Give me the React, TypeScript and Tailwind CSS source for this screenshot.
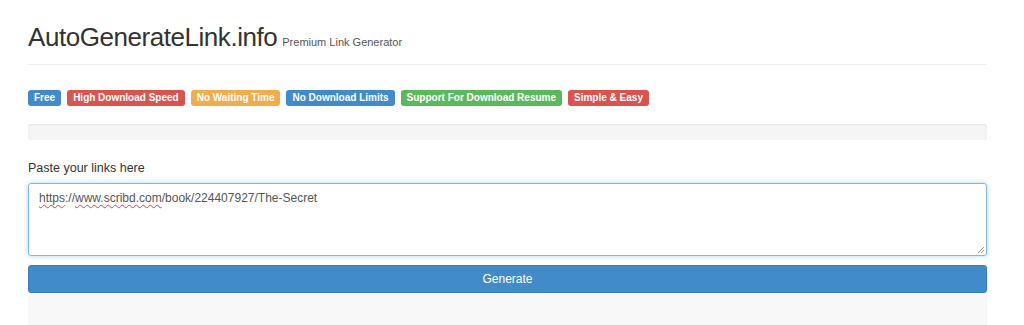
const badges = [
  { text: 'Free', color: 'bg-[#428bca]' },
  { text: 'High Download Speed', color: 'bg-[#d9534f]' },
  { text: 'No Waiting Time', color: 'bg-[#f0ad4e]' },
  { text: 'No Download Limits', color: 'bg-[#428bca]' },
  { text: 'Support For Download Resume', color: 'bg-[#5cb85c]' },
  { text: 'Simple & Easy', color: 'bg-[#d9534f]' },
];

function Badge({ text, color }: { text: string; color: string }) {
  return (
    <span
      className={`${color} flex h-4 items-center rounded-[3px] px-[6px] text-[10px] font-bold leading-none text-white`}
    >
      {text}
    </span>
  );
}

export default function App() {
  return (
    <div className="min-h-[325px] bg-white font-['Liberation_Sans',Arial,sans-serif] text-[#333]">
      <div className="ml-[28px] w-[959px] pt-[22px]">
        <div className="flex items-baseline gap-[5px]">
          <h1 className="text-[26px] leading-[30px] tracking-[-0.45px] text-[#333]">
            AutoGenerateLink.info
          </h1>
          <span className="text-[11px] text-[#555]">Premium Link Generator</span>
        </div>

        <div className="mt-[12px] h-px bg-[#eeeeee]" />

        <div className="mt-[25px] flex gap-[6px]">
          {badges.map((b) => (
            <Badge key={b.text} text={b.text} color={b.color} />
          ))}
        </div>

        <div className="mt-[18px] h-4 rounded-[3px] bg-[#f5f5f5] shadow-[inset_0_1px_2px_rgba(0,0,0,0.08)]" />

        <div className="mt-[19px] text-[12.5px] leading-[18px] text-[#333]">Paste your links here</div>

        <div className="relative mt-[6px] h-[73px] rounded-[3px] border border-[#7fb8e3] px-[10px] py-[6px] text-[12px] leading-[17px] text-[#555] shadow-[0_0_5px_rgba(102,175,233,0.5)]">
          <span className="underline decoration-[#e04040] decoration-wavy decoration-1 underline-offset-2">https</span>
          ://
          <span className="underline decoration-[#e04040] decoration-wavy decoration-1 underline-offset-2">www.scribd.com</span>
          /book/224407927/The-Secret
          <svg className="absolute bottom-[1px] right-[1px]" width="9" height="9" viewBox="0 0 9 9">
            <path d="M8 2 L2 8 M8 5 L5 8" stroke="#999" strokeWidth="1" fill="none" />
          </svg>
        </div>

        <button className="mt-[9px] flex h-[28px] w-full items-center justify-center rounded-[3px] border border-[#357ebd] bg-[#428bca] text-[12px] text-white">
          Generate
        </button>

        <div className="mt-[2px] h-[40px] bg-[#f8f8f8]" />
      </div>
    </div>
  );
}
